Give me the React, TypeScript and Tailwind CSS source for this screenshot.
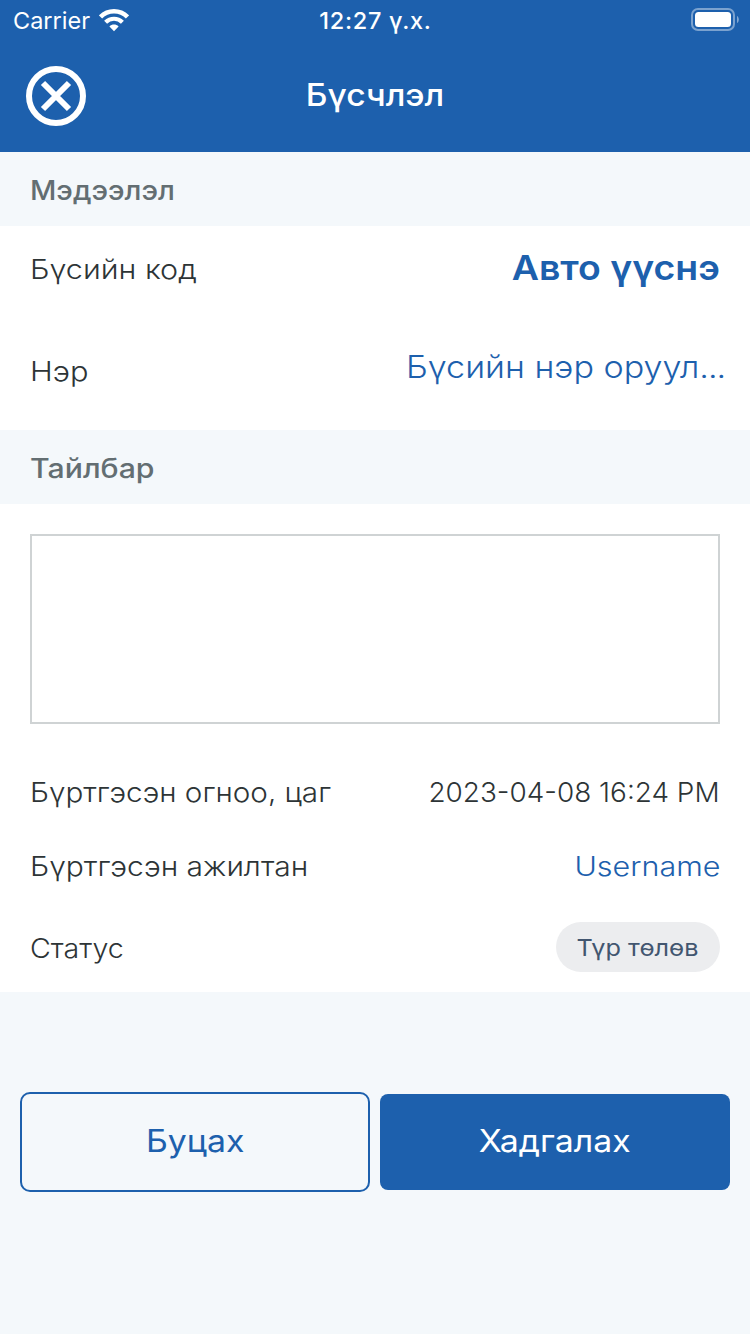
import type { ReactNode } from "react";

function WifiIcon() {
  return (
    <svg width="30" height="23" viewBox="0 0 30 23" fill="none" className="shrink-0">
      <path d="M1.5 8C9 0.4 21 0.4 28.5 8" stroke="white" strokeWidth="4.6" />
      <path d="M6.6 13.2C11.3 8.6 18.7 8.6 23.4 13.2" stroke="white" strokeWidth="4.2" />
      <path d="M10.4 17.4C13 14.8 17 14.8 19.6 17.4L15 22.2Z" fill="white" />
    </svg>
  );
}

function BatteryIcon() {
  return (
    <svg width="48" height="24" viewBox="0 0 48 24" fill="none" className="shrink-0">
      <rect x="1" y="1" width="42" height="21" rx="6" stroke="white" strokeOpacity="0.42" strokeWidth="2" />
      <rect x="4" y="4" width="36" height="15" rx="3.5" fill="white" />
      <path d="M46 8C48.4 9 48.4 14 46 15Z" fill="white" fillOpacity="0.45" />
    </svg>
  );
}

function CloseIcon() {
  return (
    <svg width="60" height="60" viewBox="0 0 60 60" fill="none">
      <circle cx="30" cy="30" r="27" stroke="white" strokeWidth="6" />
      <path d="M17 17L43 43M43 17L17 43" stroke="white" strokeWidth="6" />
    </svg>
  );
}

function SectionTitle({ children }: { children: ReactNode }) {
  return (
    <h2 className="flex h-[74px] items-center bg-[#f4f8fb] pt-[3px] pl-[30px] text-[27px] leading-none font-[550] text-[#636e72]">
      {children}
    </h2>
  );
}

function Label({ children }: { children: ReactNode }) {
  return <span className="text-[27px] leading-8 font-light whitespace-nowrap text-[#2d3436]">{children}</span>;
}

export default function App() {
  return (
    <div className="flex h-[1334px] w-[750px] flex-col overflow-hidden bg-[#f4f8fb] font-['Inter','Noto_Sans',sans-serif]">
      <header className="h-[152px] bg-[#1d60ad] text-white">
        <div className="grid h-10 grid-cols-3 items-center">
          <div className="flex items-center gap-[9px] pl-[13px]">
            <span className="pt-[2px] text-[23.5px] leading-8">Carrier</span>
            <WifiIcon />
          </div>
          <span className="pt-px pl-px text-center text-[23.5px] leading-8 font-medium tracking-[0.7px] whitespace-nowrap">12:27 ү.х.</span>
          <div className="flex justify-end pr-[11px]">
            <BatteryIcon />
          </div>
        </div>
        <div className="grid h-28 grid-cols-[150px_1fr_150px] items-center">
          <button aria-label="Хаах" className="ml-[26px] size-[60px]">
            <CloseIcon />
          </button>
          <h1 className="scale-x-[1.085] pb-[3px] text-center text-[31px] leading-10 font-[550]">Бүсчлэл</h1>
        </div>
      </header>

      <SectionTitle><span className="origin-left scale-x-[1.07]">Мэдээлэл</span></SectionTitle>
      <section className="h-[204px] bg-white">
        <div className="flex h-[84px] items-center justify-between pr-[30px] pl-[30px]">
          <div className="pt-[3px]"><Label><span className="inline-block origin-left scale-x-[1.13]">Бүсийн код</span></Label></div>
          <span className="origin-right scale-x-[1.085] text-[34.5px] leading-10 font-semibold text-[#1d60ad]">Авто үүснэ</span>
        </div>
        <div className="flex h-[120px] items-center justify-between pr-[25px] pl-[30px]">
          <div className="pt-[3px]"><Label><span className="inline-block origin-left scale-x-[1.14]">Нэр</span></Label></div>
          <span className="origin-right scale-x-[1.1] pb-[6px] text-[31px] leading-10 font-light text-[#1d60ad]">
            Бүсийн нэр оруул<span className="tracking-[-1px]">...</span>
          </span>
        </div>
      </section>

      <SectionTitle><span className="origin-left scale-x-[1.12]">Тайлбар</span></SectionTitle>
      <section className="h-[488px] bg-white px-[30px] pt-[30px]">
        <textarea aria-label="Тайлбар" className="block h-[190px] w-full resize-none border-2 border-[#cfd3d4] bg-white outline-none" />
        <div className="mt-[53px] flex h-8 items-center justify-between">
          <Label><span className="inline-block origin-left scale-x-[1.098]">Бүртгэсэн огноо, цаг</span></Label>
          <Label><span className="inline-block origin-right scale-x-[1.034]">2023-04-08 16:24 PM</span></Label>
        </div>
        <div className="mt-[42px] flex h-8 items-center justify-between">
          <Label><span className="inline-block origin-left scale-x-[1.11]">Бүртгэсэн ажилтан</span></Label>
          <span className="origin-right scale-x-[1.128] text-[27px] leading-8 font-light text-[#1d60ad]">Username</span>
        </div>
        <div className="mt-[39px] flex h-[50px] items-center justify-between">
          <div className="pt-[3px]"><Label><span className="inline-block origin-left scale-x-[1.06]">Статус</span></Label></div>
          <span className="flex h-[50px] w-[164px] items-center justify-center rounded-full bg-[#ecedef] pt-[2px] text-[23px] leading-none text-[#425670]">
            <span className="scale-x-[1.1]">Түр төлөв</span>
          </span>
        </div>
      </section>

      <footer className="flex items-center gap-[10px] px-5 pt-[100px]">
        <button className="h-[100px] w-[350px] rounded-[10px] border-2 border-[#1d60ad] pb-px text-[31px] text-[#1d60ad]">
          <span className="inline-block scale-x-[1.09]">Буцах</span>
        </button>
        <button className="h-24 w-[350px] rounded-[8px] bg-[#1d60ad] pb-px text-[31px] text-white">
          <span className="inline-block scale-x-[1.09]">Хадгалах</span>
        </button>
      </footer>
    </div>
  );
}
